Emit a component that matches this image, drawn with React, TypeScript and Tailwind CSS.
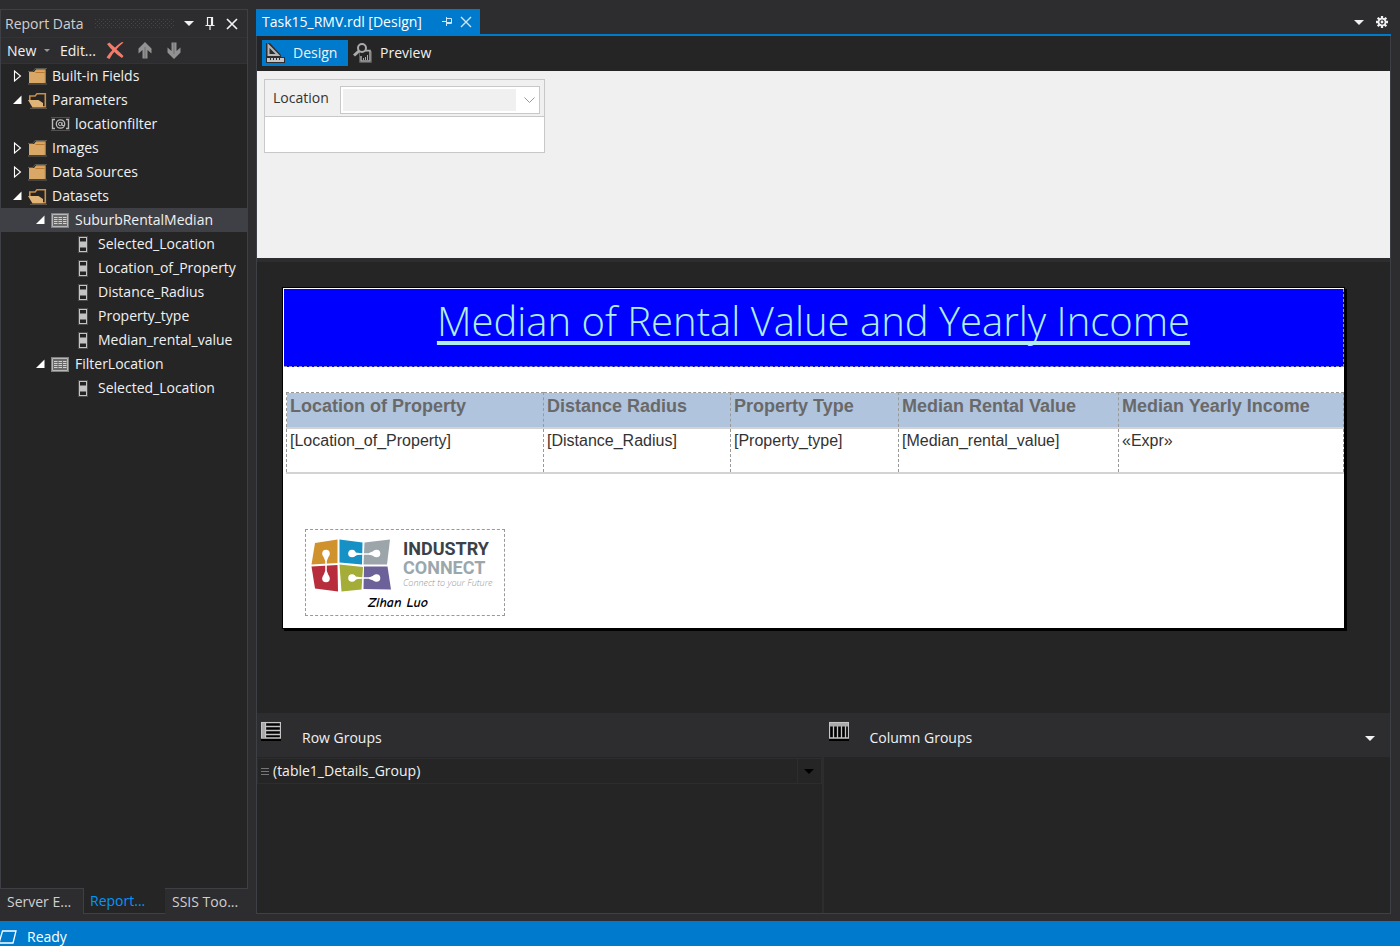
import React from "react";

type Kind = "closed" | "open" | "param" | "dataset" | "field";
type TreeNode = { label: string; kind: Kind; expanded?: boolean; selected?: boolean; children?: TreeNode[] };

const tree: TreeNode[] = [
  { label: "Built-in Fields", kind: "closed", expanded: false },
  { label: "Parameters", kind: "open", expanded: true, children: [{ label: "locationfilter", kind: "param" }] },
  { label: "Images", kind: "closed", expanded: false },
  { label: "Data Sources", kind: "closed", expanded: false },
  {
    label: "Datasets",
    kind: "open",
    expanded: true,
    children: [
      {
        label: "SuburbRentalMedian",
        kind: "dataset",
        expanded: true,
        selected: true,
        children: [
          { label: "Selected_Location", kind: "field" },
          { label: "Location_of_Property", kind: "field" },
          { label: "Distance_Radius", kind: "field" },
          { label: "Property_type", kind: "field" },
          { label: "Median_rental_value", kind: "field" },
        ],
      },
      {
        label: "FilterLocation",
        kind: "dataset",
        expanded: true,
        children: [{ label: "Selected_Location", kind: "field" }],
      },
    ],
  },
];

const columns = [
  { title: "Location of Property", value: "[Location_of_Property]", width: "w-[257px]" },
  { title: "Distance Radius", value: "[Distance_Radius]", width: "w-[187px]" },
  { title: "Property Type", value: "[Property_type]", width: "w-[168px]" },
  { title: "Median Rental Value", value: "[Median_rental_value]", width: "w-[220px]" },
  { title: "Median Yearly Income", value: "«Expr»", width: "w-auto" },
];

function Caret({ className = "text-[#f1f1f1]" }: { className?: string }) {
  return (
    <svg width="10" height="5" viewBox="0 0 10 5" className={className} aria-hidden="true">
      <path d="M0 0h10L5 5z" fill="currentColor" />
    </svg>
  );
}

function Cross({ light = false }: { light?: boolean }) {
  return (
    <svg width="12" height="12" viewBox="0 0 12 12" fill="none" stroke="currentColor" strokeWidth={light ? 1.4 : 1.7} aria-hidden="true">
      <path d="M1 1l10 10M11 1L1 11" />
    </svg>
  );
}

function Expander({ expanded }: { expanded?: boolean }) {
  if (expanded === undefined) return null;
  return expanded ? (
    <svg width="10" height="10" viewBox="0 0 10 10" aria-hidden="true">
      <path d="M9.500 .5v8.500H1z" fill="#fff" />
    </svg>
  ) : (
    <svg width="10" height="12" viewBox="0 0 10 12" aria-hidden="true">
      <path d="M2.500 1v10L8.500 6z" fill="none" stroke="#fff" strokeWidth="1.100" />
    </svg>
  );
}

function NodeIcon({ kind }: { kind: Kind }) {
  switch (kind) {
    case "closed":
      return (
        <svg width="19" height="17" viewBox="0 0 19 17" aria-hidden="true">
          <path d="M0 3.500h5L7 .5h12" fill="none" stroke="#5b5751" />
          <path d="M1 15V4h5l2-2.500h9.500V15z" fill="#d9a766" />
          <path d="M7.500 4.500h9M8 1.700h9.300V15" fill="none" stroke="#b6792e" />
          <path d="M0 16h19" stroke="#6a6256" />
        </svg>
      );
    case "open":
      return (
        <svg width="19" height="17" viewBox="0 0 19 17" aria-hidden="true">
          <path d="M1.800 9V4H7l2-2.200h8.300v13H15" fill="none" stroke="#c98f45" strokeWidth="1.600" />
          <path d="M0 8h10.500l4.500 3v4.500H4.500z" fill="#e0b377" />
          <path d="M2 16.300h17" stroke="#6a6256" />
        </svg>
      );
    case "param":
      return (
        <svg width="19" height="14" viewBox="0 0 19 14" fill="none" stroke="#b9b9b9" aria-hidden="true">
          <path d="M0 .5h19M0 13.500h19" stroke="#515151" />
          <path d="M4 2.500H1.500v9H4M15 2.500h2.500v9H15" strokeWidth="1.400" />
          <circle cx="9.500" cy="7" r="4.200" strokeWidth="1.300" />
          <circle cx="9.200" cy="7" r="1.700" />
          <path d="M11 5v3.500h2" />
        </svg>
      );
    case "dataset":
      return (
        <svg width="18" height="15" viewBox="0 0 18 15" aria-hidden="true">
          <path d="M0 0h18v15H0z" fill="#808080" />
          <path d="M1.500 1.500h15v12h-15z" fill="#6a6a6a" stroke="#b8b8b8" />
          <path d="M3 4.500h3.500M7.500 4.500H11M12 4.500h3.500M3 6.500h3.500M7.500 6.500H11M12 6.500h3.500M3 8.500h3.500M7.500 8.500H11M12 8.500h3.500M3 10.500h3.500M7.500 10.500H11M12 10.500h3.500" stroke="#d0d0d0" />
        </svg>
      );
    default:
      return (
        <svg width="10" height="17" viewBox="0 0 10 17" aria-hidden="true">
          <path d="M0 0h10v17H0z" fill="#4a4a4a" />
          <path d="M1 1h8v15H1z" fill="#c4c4c4" />
          <path d="M2 2h6v3.500H2zM2 11.500h6V15H2z" fill="#242424" />
        </svg>
      );
  }
}

const indent = ["pl-[11px]", "pl-[34px]", "pl-[57px]"];

function Branch({ nodes, level }: { nodes: TreeNode[]; level: number }) {
  return (
    <ul>
      {nodes.map((n) => (
        <li key={n.label}>
          <button
            type="button"
            aria-expanded={n.expanded}
            className={`flex h-6 w-full items-center text-left whitespace-nowrap ${indent[level]} ${n.selected ? "bg-[#3f3f46]" : ""}`}
          >
            <span className={`flex shrink-0 items-center ${n.kind === "field" ? "w-5" : "w-4"}`}>
              <Expander expanded={n.expanded} />
            </span>
            <span className={`flex shrink-0 items-center ${n.kind === "field" ? "w-5" : "w-6"}`}>
              <NodeIcon kind={n.kind} />
            </span>
            {n.label}
          </button>
          {n.children && <Branch nodes={n.children} level={level + 1} />}
        </li>
      ))}
    </ul>
  );
}

function Arrow({ down = false }: { down?: boolean }) {
  return (
    <svg width="14" height="17" viewBox="0 0 14 17" aria-hidden="true" className={down ? "rotate-180" : ""}>
      <path d="M7 0l6.500 6.500v5L9.500 8V16.500h-5V8L.5 11.500v-5z" fill="#929292" />
      <path d="M7 5v11" stroke="#6f6f6f" />
    </svg>
  );
}

function ReportData() {
  return (
    <aside className="flex w-[248px] shrink-0 flex-col">
      <div className="flex flex-1 flex-col border border-[#3f3f46] bg-[#252526]">
        <header className="flex h-[27px] items-center bg-[#2d2d30] pr-[9px] pl-1 text-[#d0d0d0]">
          <h2 className="w-[90px] whitespace-nowrap">Report Data</h2>
          <svg width="80" height="9" className="shrink-0" aria-hidden="true">
            <defs>
              <pattern id="grip" width="4" height="4" patternUnits="userSpaceOnUse">
                <path d="M0 0h1v1H0zM2 2h1v1H2z" fill="#46464a" />
              </pattern>
            </defs>
            <rect width="80" height="9" fill="url(#grip)" />
          </svg>
          <div className="ml-auto flex items-center gap-[11px] text-[#f1f1f1]">
            <button type="button" aria-label="Window position"><Caret /></button>
            <button type="button" aria-label="Auto hide">
              <svg width="10" height="15" viewBox="0 0 10 15" fill="none" stroke="currentColor" aria-hidden="true">
                <path d="M2.500 9V1.500h5V9M6.500 1v8M.5 9.500h9M5 9.500V14" strokeWidth="1.200" />
              </svg>
            </button>
            <button type="button" aria-label="Close"><Cross /></button>
          </div>
        </header>
        <div className="flex h-[27px] items-center border-y border-[#333337] bg-[#2d2d30] pl-[6px] text-[#f1f1f1]">
          <button type="button" className="flex w-[53px] items-center gap-2">
            New
            <svg width="6" height="3" viewBox="0 0 6 3" aria-hidden="true"><path d="M0 0h6L3 3z" fill="#999" /></svg>
          </button>
          <button type="button" className="w-[46px] text-left">Edit...</button>
          <button type="button" aria-label="Delete" className="w-8">
            <svg width="18" height="17" viewBox="0 0 18 17" aria-hidden="true">
              <path d="M1 2L3.500 .5C7 4 13 9.500 17.500 14L16 16C10 12 5 7.500 1 2z" fill="#f47b68" />
              <path d="M17.500 .5L16 0C10 4 4 10 .5 15.500L3.500 17C7 10.500 12 5 17.500 .5z" fill="#f47b68" />
            </svg>
          </button>
          <button type="button" aria-label="Move up" className="w-[29px]"><Arrow /></button>
          <button type="button" aria-label="Move down"><Arrow down /></button>
        </div>
        <nav aria-label="Report data" className="text-[#f1f1f1]">
          <Branch nodes={tree} level={0} />
        </nav>
      </div>
      <div role="tablist" className="-mt-px flex h-[26px] text-[#d0d0d0]">
        <button type="button" role="tab" className="w-[83px] border-t border-[#3f3f46] pl-[7px] text-left">Server E...</button>
        <button type="button" role="tab" aria-selected="true" className="w-[82px] border-b border-l border-[#3f3f46] bg-[#252526] pl-[6px] text-left text-[#0097fb]">Report...</button>
        <button type="button" role="tab" className="flex-1 border-t border-[#3f3f46] pl-[7px] text-left">SSIS Too...</button>
      </div>
    </aside>
  );
}

function Logo() {
  return (
    <svg width="81" height="54" viewBox="0 0 81 54" className="shrink-0" aria-hidden="true">
      <path d="M4 4L26.500 .5V24L.5 25.500z" fill="#d0922c" />
      <path d="M28.500 .5L51.500 3.500 51 25.500 28.500 23.500z" fill="#1591c5" />
      <path d="M53.500 3.500L79 .5 76 25.500H52.500z" fill="#9ca5aa" />
      <path d="M.5 27.500L26.500 26l.5 26.500L4 49.500z" fill="#b82d3b" />
      <path d="M28.500 25.500L52 28l-1.500 22.500L30.500 52.500z" fill="#a4ad37" />
      <path d="M53 27.500h23.500l3.500 23-27.500-.5z" fill="#6c6199" />
      <g fill="none" stroke="#fff" strokeWidth="1.600">
        <path d="M15 15v24M41 15h24M41 39h24" />
      </g>
      <g fill="#fff">
        <circle cx="15" cy="14.500" r="3.800" />
        <path d="M12 16.500h6L15.800 22h-1.600z" />
        <circle cx="15" cy="39.500" r="3.800" />
        <path d="M12 37.500h6L15.800 32h-1.600z" />
        <circle cx="41" cy="14.500" r="3.800" />
        <path d="M41 18c3 0 4-2.500 9-2.500v-1.500c-5 0-6-1-9-2z" />
        <circle cx="65.500" cy="14.500" r="3.800" />
        <path d="M64 11.500v6L58 15.500v-1.500z" />
        <circle cx="41" cy="39" r="3.800" />
        <path d="M41 42c3 0 4-2.500 9-2.500V38c-5 0-6-1-9-2z" />
        <circle cx="65.500" cy="39" r="3.800" />
        <path d="M64 36v6L58 40v-1.500z" />
      </g>
    </svg>
  );
}

function ReportCanvas() {
  return (
    <div className="mt-[25px] mr-[45px] ml-[25px] flex flex-col border border-black bg-white pt-px pb-3 pl-px text-[#333] shadow-[2px_2px_0_#000]">
      <div className="flex h-[78px] items-start justify-center border-r border-b border-dashed border-[#999] bg-[#0000ff]">
        <h1 className="font-['Open_Sans','Noto_Sans',sans-serif] text-[40px] leading-[64px] font-light whitespace-nowrap text-[#afeeee] underline decoration-[4px] underline-offset-[5px] [text-decoration-skip-ink:none]">
          Median of Rental Value and Yearly Income
        </h1>
      </div>
      <div className="mt-[25px] ml-[2px]">
        <table className="w-full table-fixed border-collapse text-left font-['Liberation_Sans',Arial,sans-serif]">
          <colgroup>
            {columns.map((c) => (
              <col key={c.title} className={c.width} />
            ))}
          </colgroup>
          <thead>
            <tr className="h-[35px] border-b-2 border-[#d3d3d3] bg-[#b0c4de]">
              {columns.map((c) => (
                <th key={c.title} scope="col" className="border-x border-t border-dashed border-t-[#999] border-r-[#999] border-l-[#999] px-[3px] pt-[3px] align-top text-[18px] leading-5 font-bold whitespace-nowrap text-[#696969]">
                  {c.title}
                </th>
              ))}
            </tr>
          </thead>
          <tbody>
            <tr className="h-[45px] border-b-2 border-[#d3d3d3]">
              {columns.map((c) => (
                <td key={c.title} className="border-x border-dashed border-r-[#999] border-l-[#999] px-[3px] pt-[2px] align-top text-[16px] leading-5 whitespace-nowrap">
                  {c.value}
                </td>
              ))}
            </tr>
          </tbody>
        </table>
      </div>
      <figure className="mt-[55px] ml-[21px] h-[87px] w-[200px] border border-dashed border-[#999] pt-[9px] pl-[5px]">
        <div className="flex gap-[11px]">
          <Logo />
          <div className="font-['Roboto',sans-serif] text-[18px] leading-[19px] font-bold whitespace-nowrap">
            <div className="text-[#3b4246]">INDUSTRY</div>
            <div className="text-[#9ca7ac]">CONNECT</div>
            <div className="font-['Open_Sans',sans-serif] text-[9px] leading-[12px] font-light text-[#8f989c] italic">Connect to your Future</div>
          </div>
        </div>
        <figcaption className="pl-[57px] font-['Segoe_Print','Comic_Neue',cursive] text-[14px] leading-5 font-bold text-black italic">Zihan Luo</figcaption>
      </figure>
    </div>
  );
}

function Designer() {
  return (
    <main className="flex min-w-0 flex-1 flex-col">
      <div className="flex h-[27px] items-stretch border-b-2 border-[#007acc]">
        <div className="flex w-[224px] items-center bg-[#007acc] pl-[6px] text-white">
          <span className="w-[174px] whitespace-nowrap">Task15_RMV.rdl [Design]</span>
          <button type="button" aria-label="Pin tab" className="w-6 pl-[6px] text-[#d0e6f5]">
            <svg width="11" height="9" viewBox="0 0 11 9" fill="none" stroke="currentColor" aria-hidden="true">
              <path d="M0 4.500h4M4.500 0v9M4.500 1.500h5v5h-5M5 5.500h5" />
            </svg>
          </button>
          <button type="button" aria-label="Close tab" className="text-[#d0e6f5]"><Cross light /></button>
        </div>
        <div className="ml-auto flex items-center gap-3 pr-[3px] text-[#f1f1f1]">
          <button type="button" aria-label="Open documents" className="pt-[2px]"><Caret /></button>
          <button type="button" aria-label="Options">
            <svg width="12" height="12" viewBox="0 0 12 12" aria-hidden="true">
              <path d="M6 0v12M0 6h12M1.700 1.700l8.600 8.600M10.300 1.700l-8.600 8.600" stroke="#f1f1f1" strokeWidth="2.300" />
              <circle cx="6" cy="6" r="4.300" fill="#f1f1f1" />
              <circle cx="6" cy="6" r="2" fill="#f1f1f1" stroke="#2d2d30" strokeWidth="1.200" />
            </svg>
          </button>
        </div>
      </div>
      <div className="flex flex-1 flex-col border-r border-b border-l border-[#3f3f46] bg-[#252526]">
        <div role="tablist" className="flex h-[35px] items-start gap-[5px] pt-1 pl-[5px] text-[#f1f1f1]">
          <button type="button" role="tab" aria-selected="true" className="flex h-[26px] w-[86px] items-center bg-[#007acc] pl-1">
            <svg width="19" height="20" viewBox="0 0 19 20" className="mr-2 shrink-0" aria-hidden="true">
              <path d="M1 0h3l11 12v2h4v6H0V0z" fill="#2d2d30" />
              <path d="M2.500 2.500v9.500h9.500z" fill="#2d2d30" stroke="#b5b5b5" strokeWidth="2" />
              <path d="M1 15h17v4H1z" fill="#c5c5c5" />
              <path d="M4.500 15v2M7.500 15v2M10.500 15v2M13.500 15v2" stroke="#2d2d30" />
            </svg>
            Design
          </button>
          <button type="button" role="tab" className="flex h-[26px] items-center">
            <svg width="20" height="20" viewBox="0 0 20 20" className="mr-[7px] shrink-0" fill="none" stroke="#aaa" aria-hidden="true">
              <path d="M6.500 8.500h12v11h-12z" fill="#252526" stroke="#5a5a5a" />
              <path d="M13 7.500h4V18H8v-5" strokeWidth="1.500" />
              <path d="M10.500 17v-2M12.500 17v-3M14.500 17v-5" />
              <circle cx="9" cy="5" r="4" fill="#252526" strokeWidth="2" />
              <path d="M6 8l-5 4.500" strokeWidth="3" />
            </svg>
            Preview
          </button>
        </div>
        <section className="h-[187px] bg-[#f0f0f0] pt-2 pl-[7px] text-[#333]">
          <div className="h-[74px] w-[281px] border border-[#c8c8c8] bg-white">
            <div className="flex h-[37px] items-start border-b border-[#c8c8c8] bg-[#f0f0f0] pt-[6px] pr-1 pl-2">
              <label htmlFor="location" className="w-[67px] pt-[2px]">Location</label>
              <div className="flex h-7 flex-1 items-center border border-[#c8c8c8] bg-white pr-1 pl-[2px]">
                <select id="location" disabled className="mr-2 h-[22px] min-w-0 flex-1 appearance-none bg-[#f0f0f0]" />
                <svg width="11" height="6" viewBox="0 0 11 6" fill="none" stroke="#999" aria-hidden="true">
                  <path d="M.5.500l5 5 5-5" />
                </svg>
              </div>
            </div>
          </div>
        </section>
        <div className="h-1 bg-[#2d2d30]" />
        <section className="flex-1">
          <ReportCanvas />
        </section>
        <section className="grid h-[200px] grid-cols-2 text-[#f1f1f1]">
          <div className="flex flex-col border-r-2 border-[#2d2d30]">
            <div className="flex h-11 items-start bg-[#2d2d30] pt-2 pl-1">
              <svg width="20" height="20" viewBox="0 0 20 20" className="shrink-0" aria-hidden="true">
                <path d="M0 0h20v20H0z" fill="#000" />
                <path d="M.5 1.500h19v15.500H.5zM4.500 2v15M4 5.500h15M4 9.500h15M4 13.500h15" fill="none" stroke="#c5c5c5" strokeWidth="1.300" />
                <path d="M1 2h3v15H1z" fill="#aaa" />
              </svg>
              <h2 className="pt-[7px] pl-[21px] leading-5">Row Groups</h2>
            </div>
            <div className="mt-px flex h-[26px] items-center border border-[#2d2d30] pl-[3px]">
              <svg width="8" height="7" viewBox="0 0 8 7" className="mr-1 shrink-0" aria-hidden="true">
                <path d="M0 .5h8M0 3.500h8M0 6.500h8" stroke="#777" />
              </svg>
              (table1_Details_Group)
              <button type="button" aria-label="Group options" className="ml-auto flex h-full w-6 items-center justify-center border-l border-[#2d2d30]"><Caret className="text-black" /></button>
            </div>
          </div>
          <div>
            <div className="flex h-11 items-start bg-[#2d2d30] pt-2 pr-[15px] pl-[5px]">
              <svg width="20" height="20" viewBox="0 0 20 20" className="shrink-0" aria-hidden="true">
                <path d="M0 0h20v20H0z" fill="#000" />
                <path d="M.5 1.500h19v15.500H.5zM4.500 5v12M8.500 5v12M12.500 5v12M16.500 5v12" fill="none" stroke="#c5c5c5" strokeWidth="1.300" />
                <path d="M1 2h18v3.500H1z" fill="#aaa" />
              </svg>
              <h2 className="pt-[7px] pl-[21px] leading-5">Column Groups</h2>
              <button type="button" aria-label="Grouping pane options" className="ml-auto flex h-[34px] items-center"><Caret /></button>
            </div>
          </div>
        </section>
      </div>
    </main>
  );
}

export default function App() {
  return (
    <div className="flex min-h-screen flex-col bg-[#2d2d30] font-['Open_Sans','Noto_Sans',sans-serif] text-[14px] leading-5">
      <div className="flex flex-1 gap-2 pt-[9px] pr-[9px] pb-[7px]">
        <ReportData />
        <Designer />
      </div>
      <footer className="flex h-[25px] items-center gap-[10px] bg-[#007acc] pt-[6px] text-white">
        <svg width="17" height="14" viewBox="0 0 17 14" fill="none" stroke="#fff" strokeWidth="1.300" aria-hidden="true">
          <path d="M2.500 1h13.500l-3 12H-1z" />
        </svg>
        Ready
      </footer>
    </div>
  );
}
